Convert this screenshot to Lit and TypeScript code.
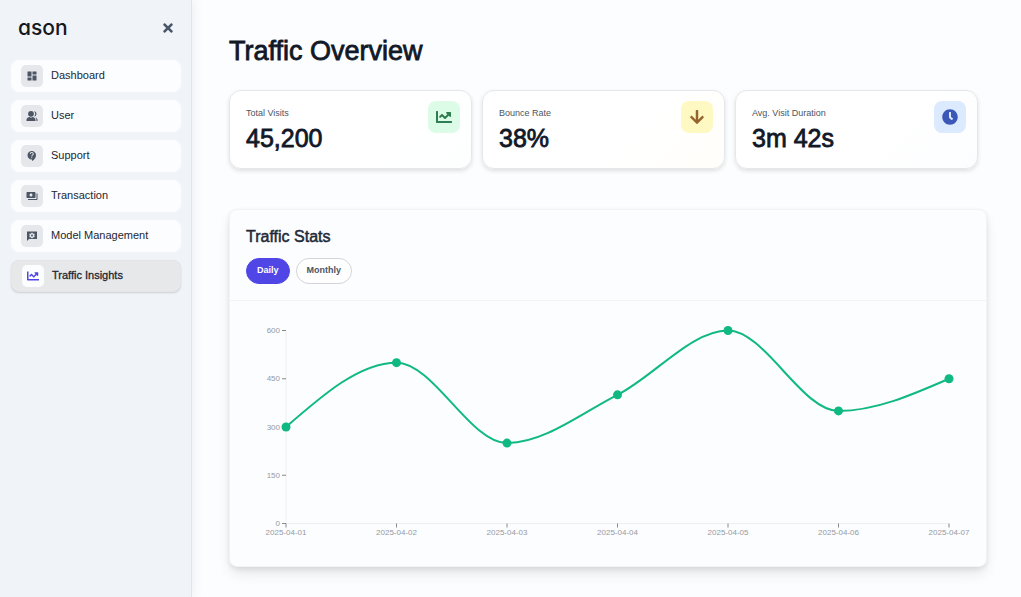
import { LitElement, html, svg, css } from "lit";
import { customElement, property, state } from "lit/decorators.js";
import { classMap } from "lit/directives/class-map.js";

interface IconShape {
  box: string;
  d: string;
}

const icons: Record<string, IconShape> = {
  close: {
    box: "0 0 352 512",
    d: "M242.72 256l100.07-100.07c12.28-12.28 12.28-32.19 0-44.48l-22.24-22.24c-12.28-12.28-32.19-12.28-44.48 0L176 189.28 75.93 89.21c-12.28-12.28-32.19-12.28-44.48 0L9.21 111.45c-12.28 12.28-12.28 32.19 0 44.48L109.28 256 9.21 356.07c-12.28 12.28-12.28 32.19 0 44.48l22.24 22.24c12.28 12.28 32.2 12.28 44.48 0L176 322.72l100.07 100.07c12.28 12.28 32.2 12.28 44.48 0l22.24-22.24c12.28-12.28 12.28-32.19 0-44.48L242.72 256z",
  },
  dashboard: {
    box: "0 0 24 24",
    d: "M3 13h8V3H3v10zm0 8h8v-6H3v6zm10 0h8V11h-8v10zm0-18v6h8V3h-8z",
  },
  user: {
    box: "0 0 24 24",
    d: "M10 13.500a5.800 5.800 0 1 1 0-11.600 5.800 5.800 0 0 1 0 11.600zM1 22v-2.500c0-3 3-5 6-5.500l3 1.500 3-1.500c3 .5 6 2.500 6 5.500V22zM16 13.200a8 8 0 0 0 0-10.900c3 0 5 2.400 5 5.400s-2 5.500-5 5.500zM20.800 22v-2.500c0-1.800-.8-3.300-2.200-4.700 2.600.7 4.400 2.400 4.400 4.700V22z",
  },
  support: {
    box: "0 0 24 24",
    d: "M11.500 2C6.810 2 3 5.810 3 10.500S6.810 19 11.500 19h.5v3c4.860-2.340 8-7 8-11.500C20 5.810 16.190 2 11.500 2zm1 14.500h-2v-2h2v2zm0-3.500h-2c0-3.250 3-3 3-5 0-1.100-.9-2-2-2s-2 .9-2 2h-2c0-2.210 1.790-4 4-4s4 1.790 4 4c0 2.500-3 2.750-3 5z",
  },
  transaction: {
    box: "0 0 24 24",
    d: "M19 14V6c0-1.100-.9-2-2-2H3c-1.100 0-2 .9-2 2v8c0 1.100.9 2 2 2h14c1.100 0 2-.9 2-2zm-9-1c-1.660 0-3-1.340-3-3s1.340-3 3-3 3 1.340 3 3-1.340 3-3 3zm13-6v11c0 1.100-.9 2-2 2H4v-2h17V7h2z",
  },
  model: {
    box: "0 0 24 24",
    d: "M22 3H2v19l4-4h16V3zM10.800 5.500h2.400l.4 1.400 1.300.7 1.400-.4 1.200 2.100-1 1v1.400l1 1-1.200 2.100-1.400-.4-1.300.7-.4 1.400h-2.400l-.4-1.400-1.300-.7-1.400.4-1.200-2.100 1-1v-1.400l-1-1 1.200-2.100 1.400.4 1.300-.7zM12 9a2 2 0 1 0 0 4 2 2 0 0 0 0-4z",
  },
  trend: {
    box: "0 0 512 512",
    d: "M496 384H64V80c0-8.840-7.160-16-16-16H16C7.160 64 0 71.160 0 80v336c0 17.670 14.330 32 32 32h464c8.840 0 16-7.160 16-16v-32c0-8.840-7.160-16-16-16zM464 96H345.940c-21.380 0-32.090 25.850-16.970 40.970l32.400 32.400L288 242.750l-73.370-73.370c-12.500-12.500-32.760-12.500-45.250 0l-68.690 68.690c-6.250 6.250-6.250 16.380 0 22.630l22.620 22.620c6.250 6.250 16.380 6.250 22.630 0L192 237.250l73.370 73.370c12.500 12.500 32.760 12.500 45.250 0l96-96 32.400 32.400c15.120 15.120 40.970 4.410 40.970-16.970V112c.01-8.840-7.150-16-15.990-16z",
  },
  down: {
    box: "0 0 448 512",
    d: "M413.100 222.500l22.200 22.200c9.400 9.400 9.400 24.600 0 33.900L241 473c-9.400 9.400-24.600 9.400-33.900 0L12.700 278.600c-9.400-9.400-9.400-24.600 0-33.900l22.200-22.200c9.500-9.500 25-9.300 34.300.4L184 343.400V56c0-13.300 10.700-24 24-24h32c13.300 0 24 10.700 24 24v287.400l114.800-120.500c9.300-9.800 24.800-10 34.300-.4z",
  },
  clock: {
    box: "0 0 512 512",
    d: "M256,8C119,8,8,119,8,256S119,504,256,504,504,393,504,256,393,8,256,8Zm92.490,313h0l-20,25a16,16,0,0,1-22.490,2.500h0l-67-49.720a40,40,0,0,1-15-31.230V112a16,16,0,0,1,16-16h32a16,16,0,0,1,16,16V256l58,42.500A16,16,0,0,1,348.490,321Z",
  },
};

const icon = (name: string) => html`
  <svg class="icon" viewBox=${icons[name].box} aria-hidden="true">
    ${svg`<path fill="currentColor" fill-rule="evenodd" d=${icons[name].d}></path>`}
  </svg>
`;

interface Sample {
  label: string;
  visits: number;
}

const daily: Sample[] = [
  { label: "2025-04-01", visits: 300 },
  { label: "2025-04-02", visits: 500 },
  { label: "2025-04-03", visits: 250 },
  { label: "2025-04-04", visits: 400 },
  { label: "2025-04-05", visits: 600 },
  { label: "2025-04-06", visits: 350 },
  { label: "2025-04-07", visits: 450 },
];

const monthly: Sample[] = [
  { label: "2025-01", visits: 420 },
  { label: "2025-02", visits: 380 },
  { label: "2025-03", visits: 540 },
  { label: "2025-04", visits: 450 },
];

type Point = [number, number];

/** Monotone cubic interpolation through points with increasing x. */
function monotonePath(points: Point[]): string {
  const n = points.length;
  if (n < 2) return "";
  const slope = (i: number) =>
    (points[i + 1][1] - points[i][1]) / (points[i + 1][0] - points[i][0]);
  const tangents = points.map(() => 0);
  for (let i = 1; i < n - 1; i++) {
    const before = slope(i - 1);
    const after = slope(i);
    const h0 = points[i][0] - points[i - 1][0];
    const h1 = points[i + 1][0] - points[i][0];
    const mean = (before * h1 + after * h0) / (h0 + h1);
    tangents[i] =
      (Math.sign(before) + Math.sign(after)) *
      Math.min(Math.abs(before), Math.abs(after), Math.abs(mean) / 2);
  }
  tangents[0] = (3 * slope(0) - tangents[1]) / 2;
  tangents[n - 1] = (3 * slope(n - 2) - tangents[n - 2]) / 2;
  let d = `M${points[0][0]},${points[0][1]}`;
  for (let i = 0; i < n - 1; i++) {
    const [x0, y0] = points[i];
    const [x1, y1] = points[i + 1];
    const dx = (x1 - x0) / 3;
    d += `C${x0 + dx},${y0 + dx * tangents[i]} ${x1 - dx},${y1 - dx * tangents[i + 1]} ${x1},${y1}`;
  }
  return d;
}

@customElement("line-chart")
export class LineChart extends LitElement {
  static styles = css`
    :host {
      display: block;
      height: 220px;
    }
    .plot {
      display: block;
      width: 100%;
      height: 100%;
      overflow: visible;
      font: 8px "Liberation Sans", Arial, sans-serif;
    }
    .axis {
      stroke: #eeeff2;
    }
    .tick {
      stroke: #85888e;
    }
    .label {
      fill: #9599a3;
    }
    .line {
      fill: none;
      stroke: #10b981;
      stroke-width: 2;
    }
    .dot {
      fill: #10b981;
    }
  `;

  @property({ attribute: false }) samples: Sample[] = [];
  @state() private width = 723;

  private observer = new ResizeObserver((entries) => {
    this.width = entries[0].contentRect.width;
  });

  connectedCallback() {
    super.connectedCallback();
    this.observer.observe(this);
  }

  disconnectedCallback() {
    this.observer.disconnect();
    super.disconnectedCallback();
  }

  render() {
    const left = 40;
    const right = this.width - 21;
    // Half-pixel edges keep the one-pixel horizontal axis crisp.
    const top = 13.5;
    const bottom = 206.5;
    const max = 600;
    const step = (right - left) / (this.samples.length - 1);
    const y = (v: number) => bottom - (v / max) * (bottom - top);
    const points = this.samples.map(
      (s, i): Point => [left + i * step, y(s.visits)],
    );
    return html`
      <svg class="plot" role="img" aria-label="Visits over time">
        ${svg`
          <line class="axis" x1=${left} y1=${top} x2=${left} y2=${bottom}></line>
          <line class="axis" x1=${left} y1=${bottom} x2=${right} y2=${bottom}></line>
          ${[0, 150, 300, 450, 600].map(
            (v) => svg`
              <line class="tick" x1=${left - 4} y1=${y(v)} x2=${left} y2=${y(v)}></line>
              <text class="label" text-anchor="end" x=${left - 6} y=${y(v) + 2.5}>${v}</text>`,
          )}
          ${this.samples.map(
            (s, i) => svg`
              <line class="tick" x1=${points[i][0]} y1=${bottom} x2=${points[i][0]} y2=${bottom + 4}></line>
              <text class="label" text-anchor="middle" x=${points[i][0]} y=${bottom + 11}>${s.label}</text>`,
          )}
          <path class="line" d=${monotonePath(points)}></path>
          ${points.map(([px, py]) => svg`<circle class="dot" cx=${px} cy=${py} r="4.500"></circle>`)}
        `}
      </svg>
    `;
  }
}

@customElement("app-root")
export class AppRoot extends LitElement {
  static styles = css`
    :host {
      display: flex;
      min-height: 100vh;
      background: #fcfdff;
      color: #111827;
      font-family: "Liberation Sans", Arial, sans-serif;
    }
    * {
      box-sizing: border-box;
    }
    .icon {
      display: block;
      width: 100%;
      height: 100%;
    }
    .sidebar {
      flex: none;
      width: 192px;
      padding: 0 10px;
      background: #f0f4f9;
      border-right: 1px solid #e2e6ec;
      box-shadow: 0 0 12px rgba(15, 23, 42, 0.08);
    }
    .brand {
      display: flex;
      align-items: center;
      justify-content: space-between;
      height: 60px;
      padding: 0 8px 4px;
    }
    .logo {
      font: 500 21px/28px Inter, sans-serif;
      font-feature-settings: "cv11";
      color: #16181d;
    }
    .close {
      width: 10px;
      height: 14px;
      padding: 0;
      border: 0;
      background: none;
      color: #475569;
      cursor: pointer;
    }
    .menu {
      display: grid;
      gap: 8px;
      margin: 0;
      padding: 0 0 0 1px;
      list-style: none;
    }
    .item {
      display: flex;
      align-items: center;
      gap: 8px;
      height: 32px;
      padding: 0 10px;
      border-radius: 8px;
      background: #fcfdff;
      color: #23272f;
      font-size: 11px;
      line-height: 16px;
      text-decoration: none;
    }
    .badge {
      flex: none;
      display: grid;
      place-items: center;
      width: 22px;
      height: 22px;
      border-radius: 5px;
      background: #e5e7eb;
      color: #4b5563;
    }
    .badge .icon {
      width: 12px;
      height: 12px;
    }
    .caption {
      padding-bottom: 2px;
    }
    .active {
      border: 1px solid #e3e5e8;
      background: #e7e8ea;
      -webkit-text-stroke: 0.3px currentColor;
      box-shadow: 0 1px 2px rgba(0, 0, 0, 0.15);
    }
    .active .badge {
      background: #fcfdff;
      color: #4f46e5;
    }
    .main {
      flex: 1;
      min-width: 0;
      padding: 32px 34px 30px 37px;
    }
    .title {
      margin: 0 0 20px;
      font-size: 27px;
      line-height: 38px;
      font-weight: 400;
      -webkit-text-stroke: 0.8px currentColor;
    }
    .stats {
      display: grid;
      grid-template-columns: repeat(3, 1fr);
      gap: 10px;
      margin: 0 9px 40px 0;
    }
    .stat {
      display: flex;
      justify-content: space-between;
      align-items: flex-start;
      padding: 10px 11px 14px 16px;
      border: 1px solid #e5e7eb;
      border-radius: 12px;
      box-shadow: 0 2px 4px rgba(0, 0, 0, 0.12);
    }
    .name {
      margin: 6px 0 3px;
      color: #4b5563;
      font-size: 9px;
      line-height: 12px;
    }
    .value {
      margin: 0;
      font-size: 25px;
      line-height: 32px;
      font-weight: 400;
      -webkit-text-stroke: 0.8px currentColor;
    }
    .chip {
      flex: none;
      display: grid;
      place-items: center;
      width: 32px;
      height: 32px;
      padding: 8px;
      border-radius: 8px;
    }
    .green {
      background: linear-gradient(135deg, #fff 60%, #fdfffe);
    }
    .green .chip {
      background: #dcfce7;
      color: #2f7d50;
    }
    .yellow {
      background: linear-gradient(135deg, #fff 60%, #fffefa);
    }
    .yellow .chip {
      background: #fef9c3;
      color: #96622d;
    }
    .blue {
      background: linear-gradient(135deg, #fff 60%, #fcfdff);
    }
    .blue .chip {
      background: #dbeafe;
      color: #3b57b7;
    }
    .panel {
      border: 1px solid #f1f3f6;
      border-radius: 8px;
      background: #fcfdff;
      box-shadow: 0 8px 14px -2px rgba(0, 0, 0, 0.1), 0 2px 5px rgba(0, 0, 0, 0.08);
    }
    .head {
      padding: 16px;
      border-bottom: 1px solid #f1f3f6;
    }
    .subtitle {
      margin: 0 0 10px;
      color: #1f2937;
      font-size: 16px;
      line-height: 22px;
      font-weight: 400;
      -webkit-text-stroke: 0.5px currentColor;
    }
    .ranges {
      display: flex;
      gap: 6px;
    }
    .range {
      height: 26px;
      padding: 0 10px 2px;
      border: 1px solid #d1d5db;
      border-radius: 13px;
      background: #fff;
      color: #4b5563;
      font: 700 9px/12px "Liberation Sans", Arial, sans-serif;
      cursor: pointer;
    }
    .selected {
      border-color: #4f46e5;
      background: #4f46e5;
      color: #fff;
    }
    .body {
      padding: 16px 16px 29px;
    }
  `;

  @state() private range: "Daily" | "Monthly" = "Daily";

  private items = [
    { icon: "dashboard", label: "Dashboard" },
    { icon: "user", label: "User" },
    { icon: "support", label: "Support" },
    { icon: "transaction", label: "Transaction" },
    { icon: "model", label: "Model Management" },
    { icon: "trend", label: "Traffic Insights", active: true },
  ];

  private stats = [
    { name: "Total Visits", value: "45,200", icon: "trend", tone: "green" },
    { name: "Bounce Rate", value: "38%", icon: "down", tone: "yellow" },
    { name: "Avg. Visit Duration", value: "3m 42s", icon: "clock", tone: "blue" },
  ];

  render() {
    return html`
      <aside class="sidebar">
        <div class="brand">
          <span class="logo">ason</span>
          <button class="close" aria-label="Close menu">${icon("close")}</button>
        </div>
        <nav>
          <ul class="menu">
            ${this.items.map(
              (item) => html`
                <li>
                  <a class=${classMap({ item: true, active: !!item.active })} href="#">
                    <span class="badge">${icon(item.icon)}</span>
                    <span class="caption">${item.label}</span>
                  </a>
                </li>
              `,
            )}
          </ul>
        </nav>
      </aside>
      <main class="main">
        <h1 class="title">Traffic Overview</h1>
        <section class="stats">
          ${this.stats.map(
            (s) => html`
              <article class=${classMap({ stat: true, [s.tone]: true })}>
                <div>
                  <p class="name">${s.name}</p>
                  <p class="value">${s.value}</p>
                </div>
                <span class="chip">${icon(s.icon)}</span>
              </article>
            `,
          )}
        </section>
        <section class="panel">
          <header class="head">
            <h2 class="subtitle">Traffic Stats</h2>
            <div class="ranges">
              ${(["Daily", "Monthly"] as const).map(
                (r) => html`
                  <button
                    class=${classMap({ range: true, selected: this.range === r })}
                    aria-pressed=${this.range === r}
                    @click=${() => (this.range = r)}
                  >${r}</button>
                `,
              )}
            </div>
          </header>
          <div class="body">
            <line-chart .samples=${this.range === "Daily" ? daily : monthly}></line-chart>
          </div>
        </section>
      </main>
    `;
  }
}
